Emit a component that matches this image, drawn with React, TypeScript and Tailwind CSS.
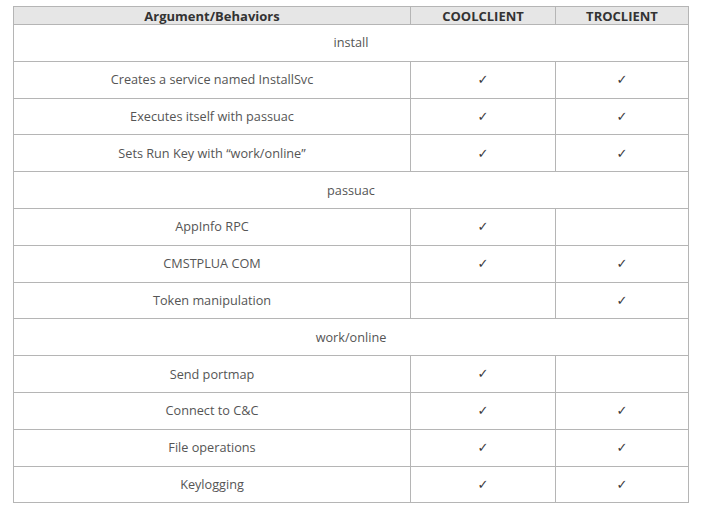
import React from "react";

type Row =
  | { section: string }
  | { label: string; cool: boolean; tro: boolean };

const rows: Row[] = [
  { section: "install" },
  { label: "Creates a service named InstallSvc", cool: true, tro: true },
  { label: "Executes itself with passuac", cool: true, tro: true },
  { label: "Sets Run Key with \u201cwork/online\u201d", cool: true, tro: true },
  { section: "passuac" },
  { label: "AppInfo RPC", cool: true, tro: false },
  { label: "CMSTPLUA COM", cool: true, tro: true },
  { label: "Token manipulation", cool: false, tro: true },
  { section: "work/online" },
  { label: "Send portmap", cool: true, tro: false },
  { label: "Connect to C&C", cool: true, tro: true },
  { label: "File operations", cool: true, tro: true },
  { label: "Keylogging", cool: true, tro: true },
];

const Check = () => (
  <span className="text-[13px] text-[#3a3a3a] font-['DejaVu_Sans',sans-serif]">✓</span>
);

export default function App() {
  return (
    <div className="w-[701px] h-[512px] bg-white pt-[6px] pl-[13px] font-['Open_Sans',sans-serif]">
      <table className="w-[675px] border-collapse border border-[#666] table-fixed">
        <colgroup>
          <col className="w-[397px]" />
          <col className="w-[145px]" />
          <col className="w-[133px]" />
        </colgroup>
        <thead>
          <tr className="h-[18px] bg-[#e6e6e6] text-[#333] text-[13px]">
            <th className="border border-[#b5b5b5] font-bold leading-[16px] p-0">Argument/Behaviors</th>
            <th className="border border-[#b5b5b5] font-bold leading-[16px] p-0">COOLCLIENT</th>
            <th className="border border-[#b5b5b5] font-bold leading-[16px] p-0">TROCLIENT</th>
          </tr>
        </thead>
        <tbody className="text-[#555] text-[12.7px]">
          {rows.map((r, i) =>
            "section" in r ? (
              <tr key={i} className="h-[36.8px]">
                <td colSpan={3} className="border border-[#b5b5b5] text-center p-0">
                  {r.section}
                </td>
              </tr>
            ) : (
              <tr key={i} className="h-[36.8px]">
                <td className="border border-[#b5b5b5] text-center p-0">{r.label}</td>
                <td className="border border-[#b5b5b5] text-center p-0">{r.cool && <Check />}</td>
                <td className="border border-[#b5b5b5] text-center p-0">{r.tro && <Check />}</td>
              </tr>
            )
          )}
        </tbody>
      </table>
    </div>
  );
}
